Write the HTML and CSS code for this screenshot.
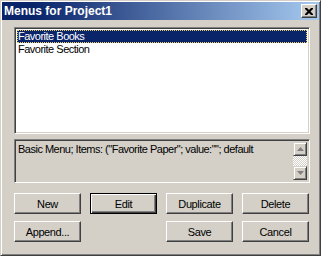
FILE: index.html
```html
<!DOCTYPE html>
<html>
<head>
<meta charset="utf-8">
<link rel="stylesheet" href="styles.css">
</head>
<body>
<div class="window">
  <div class="titlebar">
    <span class="title">Menus for Project1</span>
    <span class="close">
      <svg width="8" height="7" viewBox="0 0 8 7"><path d="M0 0h2l2 2 2-2h2v1l-2.5 2.5 2.5 2.5v1h-2l-2-2-2 2h-2v-1l2.5-2.5-2.5-2.5z" fill="#000"/></svg>
    </span>
  </div>
  <div class="content">
    <div class="listbox">
      <div class="item selected">Favorite Books</div>
      <div class="item">Favorite Section</div>
    </div>
    <div class="desc">
      <div class="desc-text">Basic Menu; Items: ("Favorite Paper"; value:""; default</div>
      <div class="scrollbar">
        <div class="sbtn"><svg width="7" height="4" viewBox="0 0 7 4"><path d="M3.5 0L7 4H0z" fill="#808080"/></svg></div>
        <div class="track"></div>
        <div class="sbtn"><svg width="7" height="4" viewBox="0 0 7 4"><path d="M0 0h7L3.5 4z" fill="#808080"/></svg></div>
      </div>
    </div>
    <div class="buttons">
      <button class="btn">New</button>
      <button class="btn default">Edit</button>
      <button class="btn">Duplicate</button>
      <button class="btn">Delete</button>
      <button class="btn">Append...</button>
      <span></span>
      <button class="btn">Save</button>
      <button class="btn">Cancel</button>
    </div>
  </div>
</div>
</body>
</html>
```

FILE: styles.css
```css
html, body {
  margin: 0;
  padding: 0;
  background: #d4d0c8;
}
.window {
  width: 321px;
  height: 256px;
  box-sizing: border-box;
  background: #d4d0c8;
  border: 1px solid;
  border-color: #d4d0c8 #404040 #404040 #d4d0c8;
  box-shadow: inset 1px 1px #fff, inset -1px -1px #808080;
  padding: 1px;
  font-family: "Liberation Sans", Arial, sans-serif;
  font-size: 11px;
  color: #000;
}
.titlebar {
  height: 18px;
  display: flex;
  align-items: center;
  justify-content: space-between;
  background: linear-gradient(to right, #0a246a 0%, #0a246a 10%, #a6caf0 100%);
  padding: 0 2px 0 2px;
}
.title {
  color: #fff;
  font-weight: bold;
  font-size: 12px;
}
.close {
  width: 16px;
  height: 14px;
  box-sizing: border-box;
  background: #d4d0c8;
  border: 1px solid;
  border-color: #fff #404040 #404040 #fff;
  box-shadow: inset -1px -1px #808080;
  display: flex;
  align-items: center;
  justify-content: center;
}
.content {
  padding: 7px 9px 0 12px;
}
.listbox {
  height: 107px;
  box-sizing: border-box;
  background: #fff;
  border: 1px solid;
  border-color: #808080 #fff #fff #808080;
  box-shadow: inset 1px 1px #404040, inset -1px -1px #d4d0c8;
  padding: 2px;
}
.item {
  height: 13px;
  line-height: 13px;
  padding-left: 1px;
  white-space: nowrap;
  letter-spacing: -0.5px;
}
.item.selected {
  background: #0a246a;
  color: #fff;
  outline: 1px dotted #f0d060;
  outline-offset: -1px;
}
.desc {
  margin-top: 5px;
  height: 44px;
  box-sizing: border-box;
  border: 1px solid;
  border-color: #808080 #fff #fff #808080;
  box-shadow: inset 1px 1px #404040, inset -1px -1px #d4d0c8;
  padding: 2px;
  display: flex;
}
.desc-text {
  flex: 1;
  padding: 1px 0 0 1px;
  white-space: nowrap;
  overflow: hidden;
  letter-spacing: -0.5px;
}
.scrollbar {
  width: 14px;
  display: flex;
  flex-direction: column;
}
.sbtn {
  height: 14px;
  box-sizing: border-box;
  background: #d4d0c8;
  border: 1px solid;
  border-color: #d4d0c8 #404040 #404040 #d4d0c8;
  box-shadow: inset 1px 1px #fff, inset -1px -1px #808080;
  display: flex;
  align-items: center;
  justify-content: center;
}
.track {
  flex: 1;
  background: repeating-conic-gradient(#fff 0 25%, #d4d0c8 0 50%) 0 0 / 2px 2px;
}
.buttons {
  margin-top: 10px;
  display: grid;
  grid-template-columns: repeat(4, 67px);
  grid-auto-rows: 21px;
  column-gap: 9px;
  row-gap: 7px;
}
.btn {
  font-family: "Liberation Sans", Arial, sans-serif;
  font-size: 11px;
  color: #000;
  letter-spacing: -0.4px;
  background: #d4d0c8;
  border: 1px solid;
  border-color: #fff #404040 #404040 #fff;
  box-shadow: inset -1px -1px #808080;
  padding: 0;
  margin: 0;
  box-sizing: border-box;
}
.btn.default {
  border-color: #000;
  box-shadow: inset 1px 1px #fff, inset -1px -1px #404040, inset -2px -2px #808080;
}
```
